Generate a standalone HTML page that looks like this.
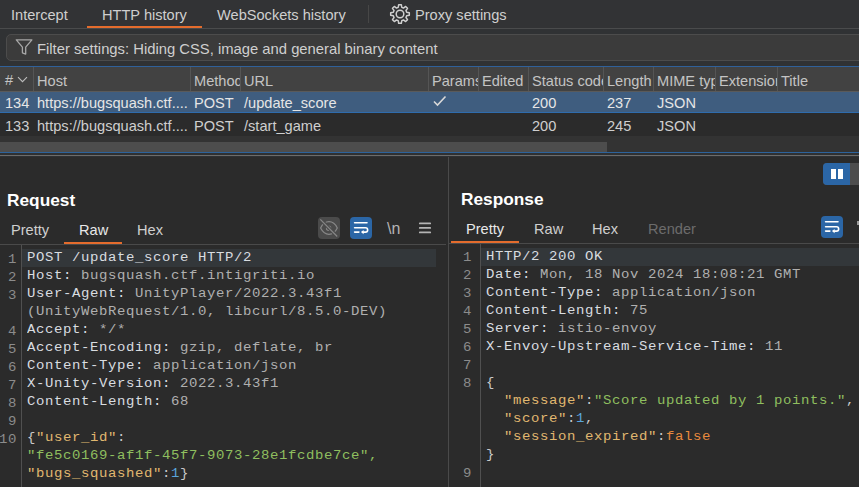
<!DOCTYPE html>
<html><head><meta charset="utf-8">
<style>
*{margin:0;padding:0;box-sizing:border-box}
html,body{width:859px;height:487px;overflow:hidden;background:#2b2b2b}
body{position:relative;font-family:"Liberation Sans",sans-serif;font-size:14.6px;color:#cfcfcf}
.a{position:absolute;white-space:pre}
.t{line-height:16px}
.m{font-family:"Liberation Mono",monospace;font-size:14px;letter-spacing:0.6px;line-height:18px;white-space:normal}
.m>div{white-space:pre;height:18px;transform:scaleY(0.86);transform-origin:0 13px}
.ln{color:#8c8c8c;text-align:right;width:18px}
.hn{color:#d9dde0}
.hv{color:#b0b0b0}
.k{color:#e0b870}
.s{color:#8fbf5f}
.n{color:#5aa6dc}
.b{color:#c9c9c9}
.f{color:#e88a3e}
</style></head><body>
<!-- top tab bar -->
<div class="a" style="left:0;top:0;width:859px;height:66px;background:#303234"></div>
<div class="a" style="left:0;top:0;width:859px;height:28px;background:#323335"></div>
<div class="a" style="left:0;top:28px;width:859px;height:1px;background:#4a4b4c"></div>
<div class="a t" style="left:11px;top:7px">Intercept</div>
<div class="a t" style="left:102px;top:7px">HTTP history</div>
<div class="a" style="left:87px;top:26px;width:115px;height:2px;background:#e46c2d"></div>
<div class="a t" style="left:217px;top:7px">WebSockets history</div>
<div class="a" style="left:368px;top:5px;width:1px;height:18px;background:#474747"></div>
<svg class="a" style="left:389px;top:3px" width="22" height="22" viewBox="0 0 22 22">
  <path d="M17.66 9.21 L20.31 9.69 L20.31 12.31 L17.66 12.79 L16.98 14.45 L18.51 16.66 L16.66 18.51 L14.45 16.98 L12.79 17.66 L12.31 20.31 L9.69 20.31 L9.21 17.66 L7.55 16.98 L5.34 18.51 L3.49 16.66 L5.02 14.45 L4.34 12.79 L1.69 12.31 L1.69 9.69 L4.34 9.21 L5.02 7.55 L3.49 5.34 L5.34 3.49 L7.55 5.02 L9.21 4.34 L9.69 1.69 L12.31 1.69 L12.79 4.34 L14.45 5.02 L16.66 3.49 L18.51 5.34 L16.98 7.55Z" fill="none" stroke="#cfcfcf" stroke-width="1.5" stroke-linejoin="round"/>
  <circle cx="11" cy="11" r="3.8" fill="none" stroke="#cfcfcf" stroke-width="1.5"/>
</svg>
<div class="a t" style="left:415px;top:7px">Proxy settings</div>

<!-- filter bar -->
<div class="a" style="left:6px;top:34px;width:870px;height:27px;background:#3b3b3b;border:1px solid #4c4c4c;border-radius:5px"></div>
<svg class="a" style="left:14px;top:37px" width="20" height="20" viewBox="0 0 20 20">
  <path d="M2.3 2.8h15.6l-6.2 7.3v7l-3.3-1.3V10.1z" fill="none" stroke="#a8a8a8" stroke-width="1.3" stroke-linejoin="round"/>
</svg>
<div class="a t" style="left:37px;top:41px;font-size:14.8px">Filter settings: Hiding CSS, image and general binary content</div>

<!-- table -->
<div class="a" style="left:0;top:66px;width:859px;height:1px;background:#30619a"></div>
<div class="a" style="left:0;top:67px;width:859px;height:24px;background:#424242"></div>
<div class="a" style="left:0;top:91px;width:859px;height:1px;background:#5a5a5a"></div>
<div class="a" style="left:0;top:92px;width:859px;height:20px;background:#3f5d7f"></div>
<div class="a" style="left:0;top:112px;width:859px;height:1px;background:#2f6cad"></div>
<div class="a" style="left:0;top:113px;width:859px;height:23px;background:#2b2b2b"></div>
<!-- header separators -->
<div class="a" style="left:33px;top:67px;width:1px;height:24px;background:#555"></div>
<div class="a" style="left:190px;top:67px;width:1px;height:24px;background:#555"></div>
<div class="a" style="left:240px;top:67px;width:1px;height:24px;background:#555"></div>
<div class="a" style="left:428px;top:67px;width:1px;height:24px;background:#555"></div>
<div class="a" style="left:478px;top:67px;width:1px;height:24px;background:#555"></div>
<div class="a" style="left:528px;top:67px;width:1px;height:24px;background:#555"></div>
<div class="a" style="left:603px;top:67px;width:1px;height:24px;background:#555"></div>
<div class="a" style="left:653px;top:67px;width:1px;height:24px;background:#555"></div>
<div class="a" style="left:715px;top:67px;width:1px;height:24px;background:#555"></div>
<div class="a" style="left:777px;top:67px;width:1px;height:24px;background:#555"></div>
<!-- header text -->
<div class="a" style="left:0;top:67px;width:859px;height:24px;overflow:hidden;color:#c4c4c4">
  <div class="a t" style="left:5px;top:5px">#</div>
  <svg class="a" style="left:17px;top:9px" width="11" height="7" viewBox="0 0 11 7"><path d="M1 1.2l4.5 4.5L10 1.2" fill="none" stroke="#bdbdbd" stroke-width="1.1"/></svg>
  <div class="a t" style="left:37px;top:6px">Host</div>
  <div class="a" style="left:194px;top:0;width:46px;height:24px;overflow:hidden"><div class="a t" style="left:0;top:6px">Method</div></div>
  <div class="a t" style="left:244px;top:6px">URL</div>
  <div class="a" style="left:432px;top:0;width:46px;height:24px;overflow:hidden"><div class="a t" style="left:0;top:6px">Params</div></div>
  <div class="a t" style="left:482px;top:6px">Edited</div>
  <div class="a" style="left:532px;top:0;width:71px;height:24px;overflow:hidden"><div class="a t" style="left:0;top:6px">Status code</div></div>
  <div class="a t" style="left:607px;top:6px">Length</div>
  <div class="a" style="left:657px;top:0;width:58px;height:24px;overflow:hidden"><div class="a t" style="left:0;top:6px">MIME type</div></div>
  <div class="a" style="left:719px;top:0;width:58px;height:24px;overflow:hidden"><div class="a t" style="left:0;top:6px">Extension</div></div>
  <div class="a t" style="left:781px;top:6px">Title</div>
</div>
<!-- row 1 -->
<div class="a t" style="left:5px;top:95px;color:#e6e6e6">134</div>
<div class="a t" style="left:37px;top:95px;color:#e6e6e6">https://bugsquash.ctf....</div>
<div class="a t" style="left:194px;top:95px;color:#e6e6e6">POST</div>
<div class="a t" style="left:244px;top:95px;color:#e6e6e6">/update_score</div>
<svg class="a" style="left:432px;top:94px" width="16" height="14" viewBox="0 0 16 14"><path d="M2 7.5l3.5 3.5L13.5 2.5" fill="none" stroke="#d8d8d8" stroke-width="1.6"/></svg>
<div class="a t" style="left:532px;top:95px;color:#e6e6e6">200</div>
<div class="a t" style="left:607px;top:95px;color:#e6e6e6">237</div>
<div class="a t" style="left:657px;top:95px;color:#e6e6e6">JSON</div>
<!-- row 2 -->
<div class="a t" style="left:5px;top:118px">133</div>
<div class="a t" style="left:37px;top:118px">https://bugsquash.ctf....</div>
<div class="a t" style="left:194px;top:118px">POST</div>
<div class="a t" style="left:244px;top:118px">/start_game</div>
<div class="a t" style="left:532px;top:118px">200</div>
<div class="a t" style="left:607px;top:118px">245</div>
<div class="a t" style="left:657px;top:118px">JSON</div>
<!-- scrollbar -->
<div class="a" style="left:0;top:136px;width:859px;height:16px;background:#333333"></div>
<div class="a" style="left:0;top:142px;width:607px;height:10px;background:#4d4d4d"></div>
<div class="a" style="left:0;top:152px;width:859px;height:1px;background:#2d639c"></div>
<div class="a" style="left:0;top:153px;width:859px;height:4px;background:#2f3133"></div>
<div class="a" style="left:0;top:155px;width:859px;height:1px;background:#6c6c6c"></div>

<!-- pane divider -->
<div class="a" style="left:448px;top:157px;width:1px;height:330px;background:#4a4a4a"></div>

<!-- REQUEST -->
<div class="a" style="left:7px;top:190px;font-weight:bold;font-size:17.3px;line-height:20px;color:#fff">Request</div>
<div class="a t" style="left:11px;top:222px">Pretty</div>
<div class="a t" style="left:79px;top:222px;color:#e8e8e8">Raw</div>
<div class="a t" style="left:137px;top:222px">Hex</div>
<div class="a" style="left:64px;top:242px;width:58px;height:2px;background:#e46c2d"></div>
<div class="a" style="left:0;top:244px;width:446px;height:1px;background:#4a4a4a"></div>
<!-- icons -->
<div class="a" style="left:318px;top:217px;width:22px;height:22px;background:#4b4b4b;border-radius:4px"></div>
<svg class="a" style="left:318px;top:217px" width="22" height="22" viewBox="0 0 22 22">
  <path d="M2.6 11C4.6 7 7.6 4.7 11 4.7S17.4 7 19.3 11C17.4 15 14.4 17.3 11 17.3S4.6 15 2.6 11z" fill="none" stroke="#888" stroke-width="1.2"/>
  <circle cx="10.6" cy="11.2" r="2.1" fill="none" stroke="#888" stroke-width="1.2"/>
  <path d="M2.5 2.5l16.8 17" stroke="#4b4b4b" stroke-width="3.4"/>
  <path d="M2.3 2.3l16.9 17.2" stroke="#888" stroke-width="1.2"/>
</svg>
<div class="a" style="left:350px;top:217px;width:22px;height:22px;background:#2b66a6;border-radius:4px"></div>
<svg class="a" style="left:350px;top:217px" width="22" height="22" viewBox="0 0 22 22">
  <path d="M4.6 5.8H17M4.6 10.8H15.5a2.15 2.15 0 0 1 0 4.3H12.5M4.6 15.1H8.9" fill="none" stroke="#fff" stroke-width="1.6" stroke-linecap="round"/>
  <path d="M13.6 12.9L11 15.1L13.6 17.3z" fill="#fff"/>
</svg>
<div class="a t" style="left:387px;top:221px;font-size:16px;color:#b4b4b4">\n</div>
<svg class="a" style="left:416px;top:219px" width="18" height="18" viewBox="0 0 18 18"><path d="M3.8 4.4H14.2M3.8 8.9H14.2M3.8 13.4H14.2" stroke="#b4b4b4" stroke-width="1.8" stroke-linecap="round"/></svg>
<!-- editor -->
<div class="a" style="left:21px;top:245px;width:1px;height:242px;background:#505050"></div>
<div class="a" style="left:22px;top:249px;width:414px;height:18px;background:#33373a"></div>
<div class="a m" style="left:-1px;top:250px">
<div class="ln a" style="left:0;top:0">1</div>
<div class="ln a" style="left:0;top:18px">2</div>
<div class="ln a" style="left:0;top:36px">3</div>
<div class="ln a" style="left:0;top:72px">4</div>
<div class="ln a" style="left:0;top:90px">5</div>
<div class="ln a" style="left:0;top:108px">6</div>
<div class="ln a" style="left:0;top:126px">7</div>
<div class="ln a" style="left:0;top:144px">8</div>
<div class="ln a" style="left:0;top:162px">9</div>
<div class="ln a" style="left:-9px;top:180px;width:27px">10</div>
</div>
<div class="a m" style="left:27px;top:248px">
<div class="hn">POST /update_score HTTP/2</div>
<div><span class="hn">Host:</span><span class="hv"> bugsquash.ctf.intigriti.io</span></div>
<div><span class="hn">User-Agent:</span><span class="hv"> UnityPlayer/2022.3.43f1</span></div>
<div class="hv">(UnityWebRequest/1.0, libcurl/8.5.0-DEV)</div>
<div><span class="hn">Accept:</span><span class="hv"> */*</span></div>
<div><span class="hn">Accept-Encoding:</span><span class="hv"> gzip, deflate, br</span></div>
<div><span class="hn">Content-Type:</span><span class="hv"> application/json</span></div>
<div><span class="hn">X-Unity-Version:</span><span class="hv"> 2022.3.43f1</span></div>
<div><span class="hn">Content-Length:</span><span class="hv"> 68</span></div>
<div> </div>
<div><span class="b">{</span><span class="k">"user_id"</span><span class="b">:</span></div>
<div class="s">"fe5c0169-af1f-45f7-9073-28e1fcdbe7ce",</div>
<div><span class="k">"bugs_squashed"</span><span class="b">:</span><span class="n">1</span><span class="b">}</span></div>
</div>

<!-- RESPONSE -->
<div class="a" style="left:823px;top:163px;width:36px;height:22px;background:#4d4d4d;border-radius:4px 0 0 4px"></div>
<div class="a" style="left:823px;top:163px;width:27px;height:22px;background:#2b66a6;border-radius:4px 0 0 4px"></div>
<div class="a" style="left:831px;top:169px;width:4.5px;height:10px;background:#fff"></div>
<div class="a" style="left:838px;top:169px;width:4.5px;height:10px;background:#fff"></div>

<div class="a" style="left:461px;top:189px;font-weight:bold;font-size:17.3px;line-height:20px;color:#fff">Response</div>
<div class="a t" style="left:466px;top:221px;color:#e8e8e8">Pretty</div>
<div class="a t" style="left:534px;top:221px">Raw</div>
<div class="a t" style="left:592px;top:221px">Hex</div>
<div class="a t" style="left:648px;top:221px;color:#6c6c6c">Render</div>
<div class="a" style="left:451px;top:241px;width:68px;height:2px;background:#e46c2d"></div>
<div class="a" style="left:449px;top:243px;width:410px;height:1px;background:#4a4a4a"></div>
<div class="a" style="left:821px;top:216px;width:22px;height:22px;background:#2b66a6;border-radius:4px"></div>
<svg class="a" style="left:821px;top:216px" width="22" height="22" viewBox="0 0 22 22">
  <path d="M4.6 5.8H17M4.6 10.8H15.5a2.15 2.15 0 0 1 0 4.3H12.5M4.6 15.1H8.9" fill="none" stroke="#fff" stroke-width="1.6" stroke-linecap="round"/>
  <path d="M13.6 12.9L11 15.1L13.6 17.3z" fill="#fff"/>
</svg>
<div class="a" style="left:857px;top:221px;width:2px;height:4px;background:#9a9a9a"></div>

<div class="a" style="left:480px;top:244px;width:1px;height:243px;background:#505050"></div>
<div class="a" style="left:481px;top:248px;width:378px;height:18px;background:#33373a"></div>
<div class="a m" style="left:454px;top:248px">
<div class="ln a" style="left:0;top:0">1</div>
<div class="ln a" style="left:0;top:18px">2</div>
<div class="ln a" style="left:0;top:36px">3</div>
<div class="ln a" style="left:0;top:54px">4</div>
<div class="ln a" style="left:0;top:72px">5</div>
<div class="ln a" style="left:0;top:90px">6</div>
<div class="ln a" style="left:0;top:108px">7</div>
<div class="ln a" style="left:0;top:126px">8</div>
<div class="ln a" style="left:0;top:216px">9</div>
</div>
<div class="a m" style="left:486px;top:247px">
<div class="hn">HTTP/2 200 OK</div>
<div><span class="hn">Date:</span><span class="hv"> Mon, 18 Nov 2024 18:08:21 GMT</span></div>
<div><span class="hn">Content-Type:</span><span class="hv"> application/json</span></div>
<div><span class="hn">Content-Length:</span><span class="hv"> 75</span></div>
<div><span class="hn">Server:</span><span class="hv"> istio-envoy</span></div>
<div><span class="hn">X-Envoy-Upstream-Service-Time:</span><span class="hv"> 11</span></div>
<div> </div>
<div class="b">{</div>
<div>  <span class="k">"message"</span><span class="b">:</span><span class="s">"Score updated by 1 points."</span><span class="b">,</span></div>
<div>  <span class="k">"score"</span><span class="b">:</span><span class="n">1</span><span class="b">,</span></div>
<div>  <span class="k">"session_expired"</span><span class="b">:</span><span class="f">false</span></div>
<div class="b">}</div>
</div>
</body></html>
